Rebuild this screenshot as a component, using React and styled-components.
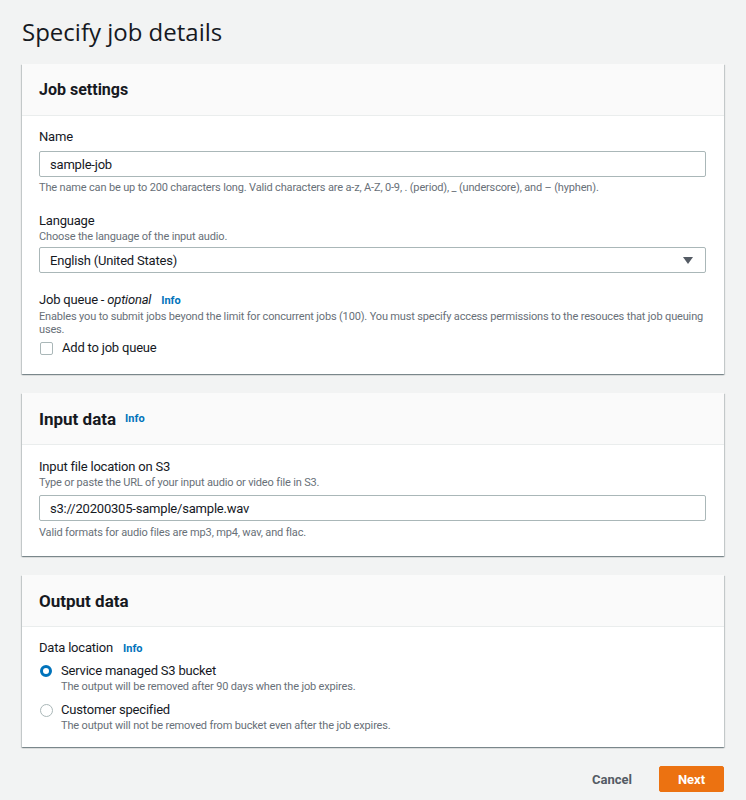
import React from 'react'
import styled, { createGlobalStyle } from 'styled-components'

const GlobalStyle = createGlobalStyle`
  body {
    margin: 0;
    background: #f2f3f3;
    font-family: Roboto, "Noto Sans", sans-serif;
    color: #16191f;
  }
`

const Page = styled.div`
  padding: 16px 22px 8px 22px;
  width: 702px;
`

const Title = styled.h1`
  font-family: "Open Sans", Roboto, sans-serif;
  font-size: 24px;
  font-weight: 400;
  line-height: 32px;
  margin: 0 0 16px 0;
`

const Panel = styled.section`
  background: #fff;
  box-shadow: 0 1px 1px 0 rgba(0, 28, 36, 0.3), 1px 1px 1px 0 rgba(0, 28, 36, 0.15), -1px 1px 1px 0 rgba(0, 28, 36, 0.15);
  margin-bottom: 19px;
`

const PanelHeader = styled.div`
  background: #fafafa;
  border-bottom: 1px solid #eaeded;
  height: 51px;
  padding: 0 17px;
  display: flex;
  align-items: center;
  gap: 9px;
`

const PanelTitle = styled.h2`
  margin: 0;
  font-weight: 700;
  font-size: ${p => (p.small ? '16px' : '17px')};
`

const PanelBody = styled.div`
  padding: ${p => p.top || 12}px 18px ${p => p.bottom || 16}px 17px;
  display: flex;
  flex-direction: column;
`

const Field = styled.div`
  margin-top: ${p => p.gap || 0}px;
  display: flex;
  flex-direction: column;
`

const LabelRow = styled.div`
  display: flex;
  align-items: baseline;
  gap: 10px;
  font-size: 13px;
  letter-spacing: -0.2px;
  line-height: 18px;
`

const Info = styled.a`
  color: #0073bb;
  font-weight: 700;
  font-size: 11px;
  letter-spacing: 0;
  text-decoration: none;
`

const Hint = styled.div`
  font-size: 11px;
  letter-spacing: -0.16px;
  line-height: ${p => p.lh || 14}px;
  color: #687078;
  margin-top: ${p => p.top || 0}px;
`

const Input = styled.div`
  margin-top: ${p => p.top || 5}px;
  height: 24px;
  border: 1px solid #aab7b8;
  border-radius: 2px;
  padding: 0 10px;
  display: flex;
  align-items: center;
  font-size: 13px;
  letter-spacing: -0.2px;
  justify-content: space-between;
`

const Caret = styled.span`
  width: 0;
  height: 0;
  border-left: 5px solid transparent;
  border-right: 5px solid transparent;
  border-top: 7px solid #545b64;
  margin-right: 2px;
`

const CheckRow = styled.label`
  display: flex;
  align-items: center;
  gap: 9px;
  margin-top: 3px;
  font-size: 13px;
  letter-spacing: -0.2px;
  line-height: 18px;
`

const Box = styled.span`
  width: 11px;
  height: 11px;
  border: 1px solid #aab7b8;
  border-radius: 2px;
  margin-left: 1px;
`

const RadioItem = styled.div`
  display: grid;
  grid-template-columns: 22px 1fr;
  margin-top: ${p => p.gap || 0}px;
`

const RadioDot = styled.span`
  width: ${p => (p.on ? '6px' : '11px')};
  height: ${p => (p.on ? '6px' : '11px')};
  border-radius: 50%;
  border: ${p => (p.on ? '3.5px solid #0073bb' : '1px solid #aab7b8')};
  margin: 3px 0 0 1px;
`

const RadioLabel = styled.div`
  font-size: 13px;
  letter-spacing: -0.2px;
  line-height: 18px;
`

const Actions = styled.div`
  display: flex;
  justify-content: flex-end;
  align-items: center;
  gap: 27px;
`

const TextButton = styled.button`
  background: none;
  border: none;
  font-family: inherit;
  font-weight: 700;
  font-size: 13px;
  color: #545b64;
  padding: 0;
`

const PrimaryButton = styled.button`
  background: #ec7211;
  border: 1px solid #ec7211;
  border-radius: 2px;
  color: #fff;
  font-family: inherit;
  font-weight: 700;
  font-size: 13px;
  width: 65px;
  height: 26px;
  padding: 0;
`

const App = () => {
  return (
    <Page>
      <GlobalStyle />
      <Title>Specify job details</Title>

      <Panel>
        <PanelHeader>
          <PanelTitle small>Job settings</PanelTitle>
        </PanelHeader>
        <PanelBody bottom={17}>
          <Field>
            <LabelRow>Name</LabelRow>
            <Input>sample-job</Input>
            <Hint top={4} lh={13}>
              The name can be up to 200 characters long. Valid characters are a-z, A-Z, 0-9, . (period), _ (underscore), and – (hyphen).
            </Hint>
          </Field>
          <Field gap={18}>
            <LabelRow>Language</LabelRow>
            <Hint>Choose the language of the input audio.</Hint>
            <Input top={3}>
              English (United States)
              <Caret />
            </Input>
          </Field>
          <Field gap={18}>
            <LabelRow>
              <span>Job queue - <i>optional</i></span>
              <Info>Info</Info>
            </LabelRow>
            <Hint lh={13}>
              Enables you to submit jobs beyond the limit for concurrent jobs (100). You must specify access permissions to the resouces that job queuing uses.
            </Hint>
            <CheckRow>
              <Box />
              Add to job queue
            </CheckRow>
          </Field>
        </PanelBody>
      </Panel>

      <Panel>
        <PanelHeader>
          <PanelTitle>Input data</PanelTitle>
          <Info>Info</Info>
        </PanelHeader>
        <PanelBody top={13} bottom={16}>
          <Field>
            <LabelRow>Input file location on S3</LabelRow>
            <Hint>Type or paste the URL of your input audio or video file in S3.</Hint>
            <Input>s3://20200305-sample/sample.wav</Input>
            <Hint top={5}>Valid formats for audio files are mp3, mp4, wav, and flac.</Hint>
          </Field>
        </PanelBody>
      </Panel>

      <Panel>
        <PanelHeader>
          <PanelTitle>Output data</PanelTitle>
        </PanelHeader>
        <PanelBody top={12} bottom={14}>
          <Field>
            <LabelRow>
              Data location
              <Info>Info</Info>
            </LabelRow>
            <RadioItem gap={4}>
              <RadioDot on />
              <div>
                <RadioLabel>Service managed S3 bucket</RadioLabel>
                <Hint>The output will be removed after 90 days when the job expires.</Hint>
              </div>
            </RadioItem>
            <RadioItem gap={7}>
              <RadioDot />
              <div>
                <RadioLabel>Customer specified</RadioLabel>
                <Hint>The output will not be removed from bucket even after the job expires.</Hint>
              </div>
            </RadioItem>
          </Field>
        </PanelBody>
      </Panel>

      <Actions>
        <TextButton>Cancel</TextButton>
        <PrimaryButton>Next</PrimaryButton>
      </Actions>
    </Page>
  )
}

export default App
